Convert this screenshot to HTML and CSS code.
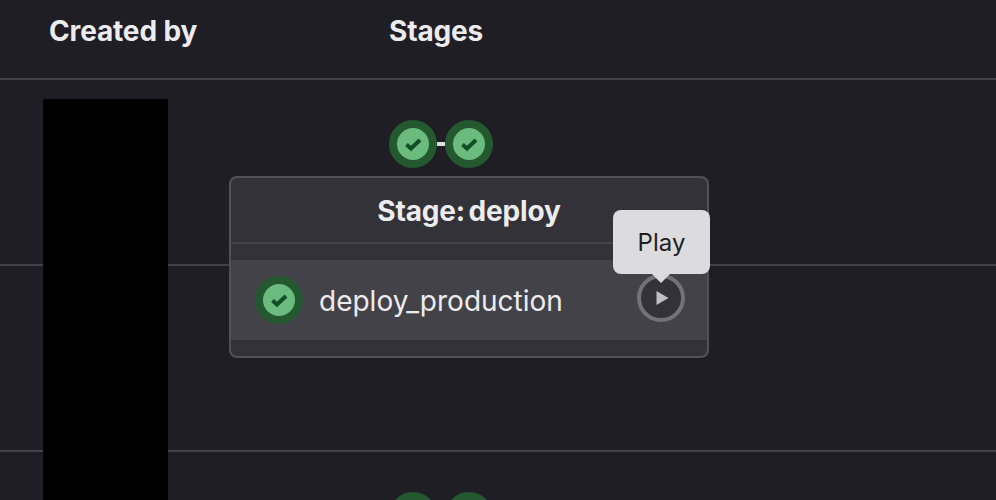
FILE: index.html
```html
<!DOCTYPE html>
<html lang="en">
<head>
<meta charset="utf-8">
<title>Pipelines</title>
<link rel="stylesheet" href="styles.css">
</head>
<body>
<div class="table">
  <div class="rule rule-head"></div>
  <div class="rule rule-one"></div>
  <div class="rule rule-two"></div>
  <div class="heading heading-user">Created by</div>
  <div class="heading heading-stages">Stages</div>
  <div class="redacted"></div>
  <div class="stages stages-one">
    <span class="badge"><svg class="check" viewBox="0 0 32 32"><circle cx="16" cy="16" r="16"/><path d="M9.5 16.5 14 20.5 23 12"/></svg></span>
    <span class="link"></span>
    <span class="badge"><svg class="check" viewBox="0 0 32 32"><circle cx="16" cy="16" r="16"/><path d="M9.5 16.5 14 20.5 23 12"/></svg></span>
  </div>
  <div class="stages stages-three">
    <span class="badge"></span>
    <span class="link"></span>
    <span class="badge"></span>
  </div>
</div>
<div class="popover">
  <div class="popover-title">Stage: deploy</div>
  <div class="popover-body">
    <div class="job">
      <span class="badge"><svg class="check" viewBox="0 0 32 32"><circle cx="16" cy="16" r="16"/><path d="M9.5 16.5 14 20.5 23 12"/></svg></span>
      <span class="job-name">deploy_production</span>
      <span class="play"><svg class="play-icon" viewBox="0 0 12 16"><path d="M0 1 12 8 0 15Z"/></svg></span>
    </div>
  </div>
</div>
<div class="tooltip">Play</div>
</body>
</html>
```
FILE: styles.css
```css
* { box-sizing: border-box; }
html, body { margin: 0; height: 100%; overflow: hidden; }
body {
  position: relative;
  background: #1f1e24;
  color: #ececef;
  font-family: Inter, "Liberation Sans", sans-serif;
}
.table {
  display: grid;
  grid-template-columns: 43px 125px 221px 1fr;
  grid-template-rows: 80px 186px 186px 1fr;
  height: 500px;
  overflow: hidden;
}
.rule { grid-column: 1 / -1; border-bottom: 2px solid #434248; }
.rule-head { grid-row: 1; }
.rule-one { grid-row: 2; }
.rule-two { grid-row: 3; }
.heading {
  grid-row: 1;
  font-size: 28px;
  font-weight: 700;
  letter-spacing: -0.15px;
  line-height: 32px;
  padding-top: 15px;
}
.heading-user { grid-column: 2; padding-left: 6px; white-space: nowrap; }
.heading-stages { grid-column: 4; }
.redacted { grid-column: 2; grid-row: 2 / 5; margin-top: 19px; background: #000; }
.stages { grid-column: 4; display: flex; align-items: center; height: 48px; }
.stages-one { grid-row: 2; margin-top: 40px; }
.stages-three { grid-row: 4; margin-top: 40px; }
.badge {
  flex: none;
  display: flex;
  align-items: center;
  justify-content: center;
  width: 48px;
  height: 48px;
  border-radius: 50%;
  background: #24592f;
}
.check {
  width: 32px;
  height: 32px;
  fill: none;
  stroke: #114d25;
  stroke-width: 4;
}
.check circle { fill: #6bbb7f; stroke: none; }
.link { width: 8px; height: 4px; background: #dcdcde; }
.popover {
  position: absolute;
  left: 229px;
  top: 176px;
  width: 480px;
  height: 182px;
  background: #333238;
  border: 2px solid #535158;
  border-radius: 8px;
  overflow: hidden;
}
.popover-title {
  height: 66px;
  border-bottom: 2px solid #434248;
  padding-top: 17px;
  text-align: center;
  font-size: 28px;
  font-weight: 700;
  letter-spacing: -0.15px;
  word-spacing: -3px;
  line-height: 32px;
}
.popover-body { padding: 16px 0; }
.job {
  display: flex;
  align-items: center;
  height: 80px;
  padding: 0 22px 0 24px;
  background: #434248;
}
.job-name { flex: 1; margin-left: 16px; padding-top: 2px; font-size: 28px; line-height: 32px; }
.play {
  display: flex;
  align-items: center;
  justify-content: center;
  width: 48px;
  height: 48px;
  margin-top: -4px;
  border: 4px solid #737278;
  border-radius: 50%;
  background: #333238;
}
.play-icon { width: 13px; height: 16px; margin-left: 2px; fill: #bfbfc3; }
.tooltip {
  position: absolute;
  left: 613px;
  top: 210px;
  width: 97px;
  height: 64px;
  background: #dcdcde;
  color: #1f1e24;
  border-radius: 8px;
  font-size: 24px;
  line-height: 65px;
  text-align: center;
}
.tooltip::after {
  content: "";
  position: absolute;
  left: 39px;
  top: 64px;
  border: 9px solid transparent;
  border-top-color: #dcdcde;
  border-bottom: 0;
}
```
